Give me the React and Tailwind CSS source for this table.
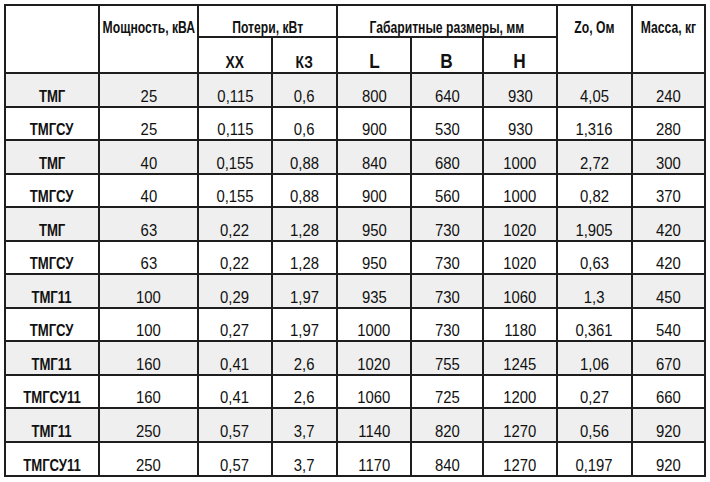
import React from 'react';

const rows = [
  ['ТМГ', '25', '0,115', '0,6', '800', '640', '930', '4,05', '240'],
  ['ТМГСУ', '25', '0,115', '0,6', '900', '530', '930', '1,316', '280'],
  ['ТМГ', '40', '0,155', '0,88', '840', '680', '1000', '2,72', '300'],
  ['ТМГСУ', '40', '0,155', '0,88', '900', '560', '1000', '0,82', '370'],
  ['ТМГ', '63', '0,22', '1,28', '950', '730', '1020', '1,905', '420'],
  ['ТМГСУ', '63', '0,22', '1,28', '950', '730', '1020', '0,63', '420'],
  ['ТМГ11', '100', '0,29', '1,97', '935', '730', '1060', '1,3', '450'],
  ['ТМГСУ', '100', '0,27', '1,97', '1000', '730', '1180', '0,361', '540'],
  ['ТМГ11', '160', '0,41', '2,6', '1020', '755', '1245', '1,06', '670'],
  ['ТМГСУ11', '160', '0,41', '2,6', '1060', '725', '1200', '0,27', '660'],
  ['ТМГ11', '250', '0,57', '3,7', '1140', '820', '1270', '0,56', '920'],
  ['ТМГСУ11', '250', '0,57', '3,7', '1170', '840', '1270', '0,197', '920'],
];

const Head = ({ className = '', children }) => (
  <div className={`bg-white flex justify-center items-start pt-[14px] ${className}`}>
    <span className="inline-block whitespace-nowrap font-bold text-[16px] leading-4 scale-x-[0.76]">{children}</span>
  </div>
);

const Sub = ({ big, children }) => (
  <div className="bg-white flex justify-center items-end pb-[1px]">
    {big ? (
      <span className="inline-block font-bold text-[21px] leading-[21px] scale-x-[0.82]">{children}</span>
    ) : (
      <span className="inline-block font-bold text-[16px] leading-4 scale-x-[0.86]">{children}</span>
    )}
  </div>
);

export default function App() {
  return (
    <div className="w-[710px] h-[482px] bg-white pl-[4px] pt-[4px] text-[#111]" style={{ fontFamily: '"Liberation Sans", Arial, sans-serif' }}>
      <div className="inline-grid bg-[#1e1e1e] p-[2px] gap-[2px] grid-cols-[92px_97px_72px_63px_72px_70px_72px_73px_71px] grid-rows-[30px_34px_32px_31px_32px_31px_32px_31px_32px_31px_32px_31px_32px_32px]">
        <div className="bg-white row-span-2" />
        <Head className="row-span-2">Мощность, кВА</Head>
        <Head className="col-span-2">Потери, кВт</Head>
        <Head className="col-span-3">Габаритные размеры, мм</Head>
        <Head className="row-span-2">Zo, Ом</Head>
        <Head className="row-span-2">Масса, кг</Head>
        <Sub>ХХ</Sub>
        <Sub>КЗ</Sub>
        <Sub big>L</Sub>
        <Sub big>B</Sub>
        <Sub big>H</Sub>
        {rows.map((r, i) =>
          r.map((v, j) => (
            <div
              key={`${i}-${j}`}
              className={`${i % 2 === 0 ? 'bg-[#efefef]' : 'bg-white'} flex justify-center items-end pb-[1px]`}
            >
              {j === 0 ? (
                <span className="inline-block whitespace-nowrap font-bold text-[16px] leading-4 scale-x-[0.82]">{v}</span>
              ) : (
                <span className="inline-block whitespace-nowrap text-[16px] leading-4 scale-x-[0.93]">{v}</span>
              )}
            </div>
          ))
        )}
      </div>
    </div>
  );
}
